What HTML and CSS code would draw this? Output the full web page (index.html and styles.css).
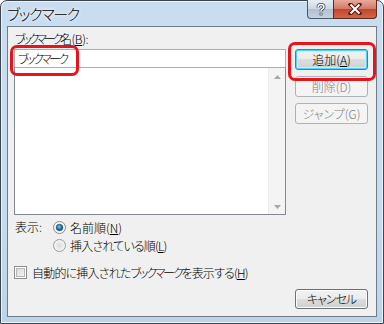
FILE: index.html
```html
<!DOCTYPE html>
<html lang="ja">
<head>
<meta charset="utf-8">
<title>ブックマーク</title>
<link rel="stylesheet" href="styles.css">
</head>
<body>
<div class="window">
  <div class="titlebar">
    <div class="title">ブックマーク</div>
    <div class="caption-buttons">
      <div class="cap help"><svg width="12" height="13" viewBox="0 0 12 13"><path d="M3 4.5 C3 2 4.5 1.5 6 1.5 C7.8 1.5 9 2.5 9 4 C9 5.5 7.5 6 6.5 6.8 C6 7.2 6 7.8 6 8.5" fill="none" stroke="#3a4a5a" stroke-width="3"/><path d="M3 4.5 C3 2 4.5 1.5 6 1.5 C7.8 1.5 9 2.5 9 4 C9 5.5 7.5 6 6.5 6.8 C6 7.2 6 7.8 6 8.5" fill="none" stroke="#fff" stroke-width="1.4"/><rect x="4.6" y="9.8" width="2.8" height="2.6" fill="#3a4a5a"/><rect x="5.3" y="10.4" width="1.4" height="1.4" fill="#fff"/></svg></div>
      <div class="cap close"><svg width="14" height="12" viewBox="0 0 14 12"><path d="M2.5 1.5 L11.5 10.5 M11.5 1.5 L2.5 10.5" stroke="#5a1a10" stroke-width="4" stroke-linecap="square"/><path d="M2.5 1.5 L11.5 10.5 M11.5 1.5 L2.5 10.5" stroke="#fff" stroke-width="2"/></svg></div>
    </div>
  </div>
  <div class="client">
    <div class="main">
      <div class="left">
        <div class="label"><span class="kana-l">ブックマーク</span>名(<u>B</u>):</div>
        <div class="edit"><span class="kana">ブックマーク</span></div>
        <div class="list">
          <div class="vscroll">
            <svg width="7" height="4" viewBox="0 0 7 4"><path d="M0 4 L3.5 0 L7 4 Z" fill="#a8a8a8"/></svg>
            <svg width="7" height="4" viewBox="0 0 7 4"><path d="M0 0 L3.5 4 L7 0 Z" fill="#a8a8a8"/></svg>
          </div>
        </div>
      </div>
      <div class="right">
        <div class="btn default">追加(<u>A</u>)</div>
        <div class="btn disabled">削除(D)</div>
        <div class="btn disabled">ジャンプ(G)</div>
      </div>
    </div>
    <div class="view">
      <div class="view-label">表示:</div>
      <div class="radios">
        <div class="opt">
          <svg class="radio" width="13" height="13" viewBox="0 0 13 13"><defs><radialGradient id="rg1" cx="0.5" cy="0.5" r="0.5"><stop offset="0" stop-color="#e6e6e6"/><stop offset="1" stop-color="#fbfbfb"/></radialGradient><radialGradient id="dot" cx="0.45" cy="0.4" r="0.6"><stop offset="0" stop-color="#8ed0f5"/><stop offset="0.5" stop-color="#2a7fbf"/><stop offset="1" stop-color="#0c3e6e"/></radialGradient></defs><circle cx="6.5" cy="6.5" r="6" fill="url(#rg1)" stroke="#8a8a8a"/><circle cx="6.5" cy="6.5" r="3.3" fill="url(#dot)" stroke="#1f4e79" stroke-width="0.6"/></svg>
          <span>名前順(<u>N</u>)</span>
        </div>
        <div class="opt">
          <svg class="radio" width="13" height="13" viewBox="0 0 13 13"><defs><radialGradient id="rg2" cx="0.5" cy="0.5" r="0.5"><stop offset="0" stop-color="#dcdcdc"/><stop offset="1" stop-color="#f8f8f8"/></radialGradient></defs><circle cx="6.5" cy="6.5" r="6" fill="url(#rg2)" stroke="#9a9a9a"/></svg>
          <span class="tight">挿入されている順(<u>L</u>)</span>
        </div>
      </div>
    </div>
    <div class="check-row">
      <svg class="check" width="13" height="13" viewBox="0 0 13 13"><defs><linearGradient id="cg" x1="0" y1="0" x2="1" y2="1"><stop offset="0" stop-color="#d9d9d9"/><stop offset="1" stop-color="#f6f6f6"/></linearGradient></defs><rect x="0.5" y="0.5" width="12" height="12" fill="#fff" stroke="#8e8f8f"/><rect x="2.5" y="2.5" width="8" height="8" fill="url(#cg)" stroke="#b8b8b8"/></svg>
      <span class="tight">自動的に挿入された<span class="kana">ブックマーク</span>を表示する(<u>H</u>)</span>
    </div>
    <div class="footer">
      <div class="btn"><span class="kana-s">キャンセル</span></div>
    </div>
  </div>
  <div class="mark mark-edit"></div>
  <div class="mark mark-add"></div>
</div>
</body>
</html>
```

FILE: styles.css
```css
* { box-sizing: border-box; }
html, body { margin: 0; padding: 0; }
body {
  width: 384px;
  height: 324px;
  overflow: hidden;
  background: #ffffff;
  font-family: "Noto Sans CJK JP", "Noto Sans", sans-serif;
  font-feature-settings: "palt";
  font-size: 12px;
  font-weight: 300;
  color: #000;
}
.kana { letter-spacing: -2.6px; }
.kana-l { letter-spacing: -3.2px; }
.kana-s { letter-spacing: -1px; }
.tight { letter-spacing: -0.8px; }
.tight .kana { letter-spacing: -2.2px; }
.window {
  position: relative;
  width: 384px;
  height: 324px;
  border: 1px solid #3d4650;
  border-radius: 7px 7px 0 0;
  background: linear-gradient(180deg, #c9ddef 0%, #c6dcf1 60%, #bdd3e9 100%);
  display: flex;
  flex-direction: column;
  box-shadow: inset 0 0 0 1px #e9f2fb;
}
.titlebar {
  height: 26px;
  display: flex;
  align-items: flex-start;
}
.title {
  padding: 3px 0 0 6px;
  font-size: 15px;
  line-height: 20px;
  letter-spacing: -1.4px;
  text-shadow: 0 0 6px #ffffff, 0 0 3px #ffffff;
}
.caption-buttons {
  margin-left: auto;
  margin-right: 6px;
  margin-top: -1px;
  display: flex;
}
.cap {
  height: 19px;
  display: flex;
  align-items: center;
  justify-content: center;
  border: 1px solid #4c5866;
  border-top: none;
}
.help {
  width: 26px;
  border-radius: 0 0 0 4px;
  border-right: none;
  background: linear-gradient(180deg, #e6edf4 0%, #cdd8e3 48%, #b2c0cf 52%, #c3d2e0 100%);
}
.close {
  width: 44px;
  border-radius: 0 0 4px 0;
  background: linear-gradient(180deg, #e9a99b 0%, #d47a66 48%, #c2452d 52%, #d2654a 100%);
  border-color: #5c2a22;
}
.client {
  margin: 0 6px 6px 6px;
  border: 1px solid #6f7d8b;
  background: #f0f0f0;
  padding: 4px 8px 7px 6px;
  flex: 1;
  display: flex;
  flex-direction: column;
}
.main {
  display: flex;
  gap: 9px;
}
.left {
  width: 272px;
  display: flex;
  flex-direction: column;
}
.label {
  line-height: 16px;
  height: 16px;
  margin-bottom: 2px;
  padding-left: 1px;
  letter-spacing: -0.4px;
}
.edit {
  height: 19px;
  border: 1px solid #abadb3;
  background: #fff;
  line-height: 17px;
  padding-left: 3px;
}
.list {
  margin-top: -1px;
  height: 148px;
  border: 1px solid #828790;
  border-top-color: #abadb3;
  background: #fff;
  display: flex;
  justify-content: flex-end;
}
.vscroll {
  width: 17px;
  background: #f4f4f4;
  border-left: 1px solid #ececec;
  display: flex;
  flex-direction: column;
  justify-content: space-between;
  align-items: center;
  padding: 7px 0 5px 0;
}
.right {
  width: 73px;
  padding-top: 18px;
  display: flex;
  flex-direction: column;
  gap: 6px;
}
.btn {
  height: 21px;
  border: 1px solid #707070;
  border-radius: 3px;
  background: linear-gradient(180deg, #f2f2f2 0%, #ebebeb 50%, #dddddd 50%, #cfcfcf 100%);
  box-shadow: inset 0 0 0 1px #fbfbfb;
  display: flex;
  align-items: center;
  justify-content: center;
  line-height: 16px;
}
.btn.default {
  border-color: #3c7fb1;
  box-shadow: inset 0 0 0 1px #48d8fb, inset 0 0 0 2px #c8eefd;
}
.btn.disabled {
  border-color: #adb2b5;
  background: #f4f4f4;
  box-shadow: none;
  color: #838383;
}
.view {
  margin-top: 3px;
  display: flex;
}
.view-label {
  width: 39px;
  padding-left: 1px;
  line-height: 18px;
}
.radios {
  display: flex;
  flex-direction: column;
}
.opt {
  height: 18px;
  display: flex;
  align-items: center;
  gap: 4px;
}
.check-row {
  margin-top: 9px;
  height: 18px;
  display: flex;
  align-items: center;
  gap: 5px;
}
.footer {
  margin-top: 8px;
  display: flex;
  justify-content: flex-end;
}
.footer .btn {
  width: 73px;
  height: 20px;
}
.mark {
  position: absolute;
  border: 3px solid #e8141b;
  border-radius: 7px;
}
.mark-edit {
  left: 9px;
  top: 44px;
  width: 69px;
  height: 31px;
}
.mark-add {
  left: 287px;
  top: 41px;
  width: 88px;
  height: 39px;
}
```
